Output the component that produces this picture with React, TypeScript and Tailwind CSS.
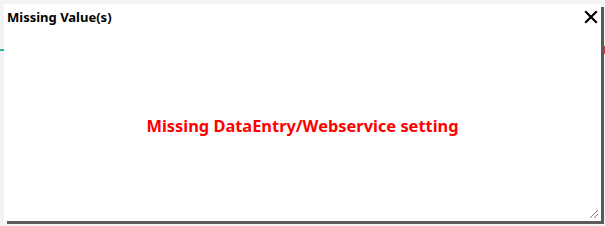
export default function App() {
    return (
        <div className="relative w-[605px] h-[226px] bg-[#f3f3f3] overflow-hidden pl-[4px] pt-[4px]" style={{ fontFamily: '"Noto Sans", "Open Sans", sans-serif' }}>
            {/* bits of the page behind the dialog */}
            <div className="absolute left-0 top-[49px] w-[4px] h-[2px] bg-[#1fb5a0]" />
            <div className="absolute right-0 top-[46px] w-[2px] h-[8px] bg-[#d04040]" />

            <div className="relative w-[597px] h-[217px] bg-white flex flex-col shadow-[3px_3px_0_0_#5a5a5a]">
                <div className="flex items-center justify-between px-[3px] pt-[5px]">
                    <span className="text-[13px] font-bold text-black leading-[16px]">Missing Value(s)</span>
                    <svg width="14" height="14" viewBox="0 0 14 14">
                        <path d="M2 2 L12 12 M12 2 L2 12" stroke="#000" strokeWidth="2.2" strokeLinecap="square" />
                    </svg>
                </div>
                <div className="flex-1 flex items-center justify-center pt-[6px]">
                    <span className="text-[16.4px] font-bold text-[#ff0000]">Missing DataEntry/Webservice setting</span>
                </div>
                <svg width="10" height="10" viewBox="0 0 10 10" className="absolute right-[2px] bottom-[2px]">
                    <path d="M1 9 L9 1 M5 9 L9 5" stroke="#808080" strokeWidth="1" />
                </svg>
            </div>
        </div>
    );
}
